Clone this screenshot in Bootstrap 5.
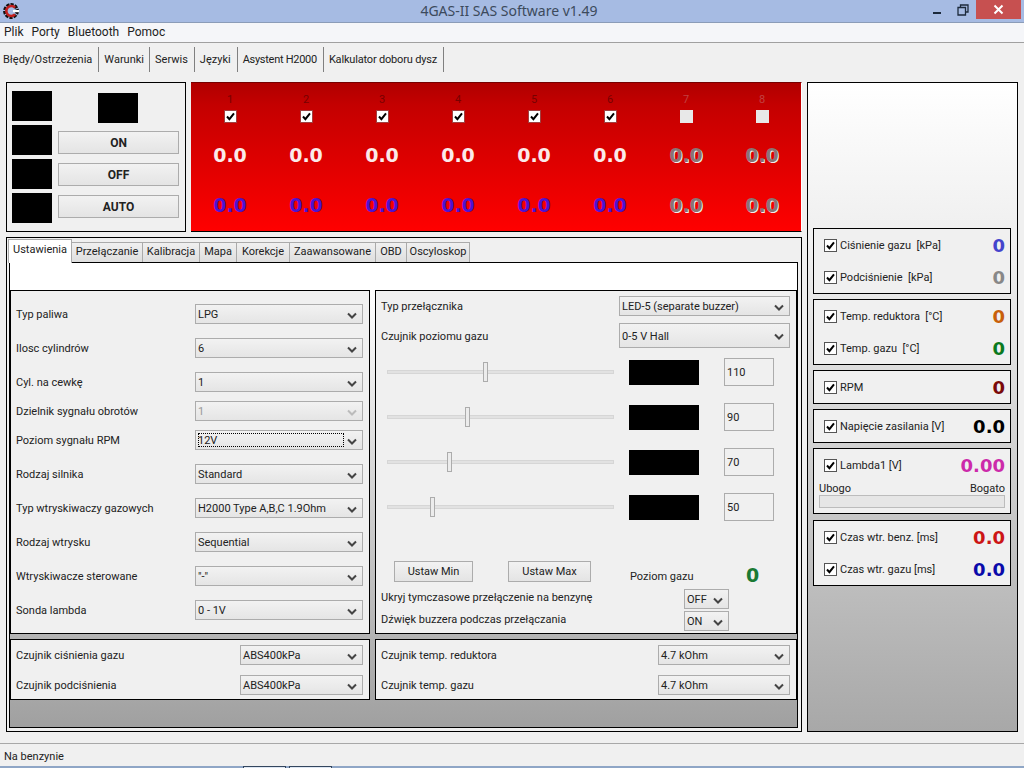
<!DOCTYPE html>
<html lang="pl">
<head>
<meta charset="utf-8">
<title>4GAS-II SAS Software v1.49</title>
<link rel="stylesheet" href="https://cdn.jsdelivr.net/npm/bootstrap@5.3.0/dist/css/bootstrap.min.css">
<style>
html,body{height:768px;overflow:hidden;margin:0}
body{background:#f0f0f0;font-family:Roboto,"Noto Sans",sans-serif;font-size:11px;color:#222;line-height:1.2}
.win-title{height:23px;background:#a6bbe3;border-bottom:1px solid #8b9cb8;position:relative}
.win-name{font-size:14px;font-family:"Noto Sans",sans-serif;color:#3c4a5c;width:100%;text-align:center;padding-right:6px}
.win-logo{position:absolute;left:2px;top:2px}
.win-btns{position:absolute;right:3px;top:0;height:19px}
.win-close{width:45px;height:19px;background:#c75050}
.win-ctl{width:26px;height:19px}
.menu-strip{height:20px;background:#f5f6f9;border-bottom:1px solid #a0a0a0;padding-left:4px;font-size:12px;gap:8px}
.tool-strip{height:39px;padding-top:4px;padding-left:3px}
.tool-item{height:25px;border-right:1px solid #808080;padding-right:6px;margin-right:5px}
.tool-item.tool-w{padding-right:5px}
.tool-item.tool-a{letter-spacing:-.28px}
.tool-item.tool-k{letter-spacing:-.18px}
.main-area{height:651px;padding-left:6px;gap:5px}
.left-col{width:796px}
.top-row{height:150px;gap:5px}
.inj-ctl{width:180px;border:1px solid #000;background:#f0f0f0;padding:8px 6px 8px 5px;gap:6px}
.blk{background:#000}
.sq{width:40px;height:30px}
.sq-stack{gap:4px}
.ctl-btn{width:121px;height:23px;margin-left:0;background:linear-gradient(#f2f2f2,#e4e4e4);border:1px solid #acacac;border-radius:0;font-weight:700;font-size:12px;padding:0;color:#222;line-height:1}
.ctl-col{gap:9px}
.big-sq{margin:2px 0 8px 40px}
.red-panel{width:611px;background:linear-gradient(#b00000,#c40000 15%,#ff0000);border-bottom:1px solid #000;border-right:1px solid #fff;border-top:1px solid #700;padding-left:1px}
.red-col{width:76px;text-align:center;padding-top:11px}
.red-num{height:12px;font-size:11px;color:#700;line-height:12px}
.red-num.off{color:#c24040}
.cyl-check{margin:4px auto 0;height:16px}
.val-r{font-family:"DejaVu Sans",sans-serif;font-weight:700;font-size:19px;line-height:24px;letter-spacing:0}
.val-w{color:#fbeaea;margin-top:17px}
.val-b{color:#4f12cf;margin-top:26px}
.val-g{color:#8a7474;text-shadow:1px 1px 0 #f2eeee}
.tabs-box{height:495px;margin-top:5px;border:1px solid #000;padding:2px 3px 4px 2px;background:#f0f0f0;position:relative}
.tab-head{height:22px;margin-left:-1px;align-items:flex-end}
.tab-a{height:24px;width:64px;background:#fff;border:1px solid #aaa;border-bottom:0;text-align:center;padding-top:3px;margin-bottom:-1px;z-index:2;position:relative}
.tab-i{height:20px;background:linear-gradient(#f0f0f0,#dedede);border:1px solid #aaa;border-left:0;border-bottom:0;text-align:center;padding-top:2px}
.tab-page{height:466px;border:1px solid #000;background:linear-gradient(#fff,#fff 26px,#a0a0a0);padding-top:27px}
.grp{border:1px solid #000;background:#f0f0f0}
.grp-l{width:360px}
.grp-r{width:422px;margin-left:5px}
.grp-tall{height:344px}
.grp-low{height:61px;margin-top:5px}
.set-row{height:20px;padding-left:5px;padding-right:6px}
.set-row .lbl{width:179px;padding-top:2px}
.set-row .lbl-low{width:224px;padding-top:2px}
.gap-first{margin-top:13px}
.gap-big{margin-top:14px}
.gap-small{margin-top:9px}
.win-select{height:20px;border:1px solid #acacac;border-radius:0;padding:2px 18px 0 2px;font-family:inherit;font-size:11px;color:#222;line-height:1.2;background-color:#ebebeb;background-image:linear-gradient(#f2f2f2,#e5e5e5);position:relative;display:flex;align-items:center}
.win-select svg{position:absolute;right:5px;top:7px}
.sel-w{width:168px}
.sel-low{width:123px}
.sel-r{width:171px}
.sel-rl{width:132px}
.sel-dis{color:#999}
.sel-tall{height:25px}
.sel-tall svg{top:9px}
.focus-box{position:absolute;left:2px;top:2px;bottom:2px;right:18px;border:1px dotted #000}
.rgrp-pad{padding:5px 6px 0 5px}
.rlbl{width:238px;padding-top:2px}
.rlbl-low{width:277px;padding-top:2px}
.row-7{margin-top:7px}
.row-2{margin-top:2px}
.row-10{margin-top:10px}
.row-5{margin-top:5px}
.slide-first{margin-top:2px}
.slide-row{height:45px;display:flex;align-items:center}
.slide-track{width:227px;height:4px;background:#e2e2e2;border:1px solid #d6d6d6;margin:-2px 0 0 6px;position:relative}
.slide-knob{position:absolute;top:-9px;width:5px;height:20px;background:#ececec;border:1px solid #acacac}
.lvl{width:70px;height:25px;margin-left:15px}
.num-box{width:50px;height:28px;margin:-1px 0 0 25px;border:1px solid #acacac;background:#f0f0f0;padding:2px 0 0 2px;display:flex;align-items:center}
.std-btn{height:21px;background:linear-gradient(#f2f2f2,#e4e4e4);border:1px solid #acacac;border-radius:0;padding:0;font-size:11px;color:#222;line-height:1}
.btn-row{margin-top:31px;height:21px}
.btn-mn{width:79px;margin-left:13px}
.btn-mx{width:83px;margin-left:35px}
.lvl-lbl{margin-left:39px;padding-top:9px;width:116px}
.lvl-val{font-family:"DejaVu Sans",sans-serif;font-weight:700;font-size:19px;color:#1a7a34;line-height:19px;margin-top:5px}
.sel-s{width:45px}
.hide-lbl{width:303px}
.hide-up{padding-bottom:2px}
.side-panel{width:211px;height:650px;border:1px solid #000;background:linear-gradient(#fff,#f0f0f0 22%,#f0f0f0 24%,#a8a8a8);padding:145px 6px 0 5px}
.side-grp{border:1px solid #000;background:#f0f0f0;margin-bottom:5px;padding:0 5px 0 10px}
.side-grp.mb-six{margin-bottom:6px}
.h65{height:66px}
.h34{height:34px}
.side-row{height:32px}
.side-row .lbl2{flex:1 1 auto;padding:2px 0 0 3px}
.side-val{font-family:"DejaVu Sans",sans-serif;font-weight:700;line-height:20px;font-size:18px;padding-top:2px}
.side-bar{height:13px;background:#e6e6e6;border:1px solid #bcbcbc;margin:0 0 0 -5px}
.lam-txt{margin:1px 0 0 -5px;justify-content:space-between}
.win-check.form-check-input[type=checkbox]{width:13px;height:13px;margin:0;border:1px solid #555;border-radius:0;background-color:#fff;flex:none}
.win-check.form-check-input[type=checkbox]:checked{background-color:#fff;border-color:#555;background-size:11px 11px;background-image:url("data:image/svg+xml,%3csvg xmlns='http://www.w3.org/2000/svg' viewBox='0 0 11 11'%3e%3cpath fill='none' stroke='%23000' stroke-width='2' d='M2 5.5l2.4 2.6L9 2.4'/%3e%3c/svg%3e")}
.win-check:focus{box-shadow:none}
.win-check.form-check-input[type=checkbox]:disabled{opacity:1;background-color:#e8e8e8;border-color:#e8e8e8}
.win-check.red-check.form-check-input[type=checkbox]{border-color:#a04040}
.status-strip{height:23px;border-top:1px solid #a8a8a8;padding:6px 0 0 4px;margin-top:10px}
.task-strip{height:3px;background:#8fa6c6;padding-left:243px;gap:3px}
.task-btn{width:43px;height:3px;border:1px solid #33465e;border-bottom:0;background:#dde6f2}
</style>
</head>
<body>
<div class="win-title d-flex align-items-center">
  <svg class="win-logo" width="18" height="18" viewBox="0 0 18 18"><circle cx="9" cy="9" r="6.2" fill="none" stroke="#111" stroke-width="3.4" stroke-dasharray="3 1"/><path d="M13 5.6A5 5 0 1 0 13 12.4" fill="none" stroke="#c3201f" stroke-width="2.6"/><rect x="11" y="8" width="6" height="2.2" fill="#fff"/></svg>
  <div class="win-name">4GAS-II SAS Software v1.49</div>
  <div class="win-btns d-flex">
    <div class="win-ctl d-flex align-items-center justify-content-center"><svg width="10" height="10" viewBox="0 0 10 10"><rect x="1" y="7" width="8" height="2" fill="#1c2a3c"/></svg></div>
    <div class="win-ctl d-flex align-items-center justify-content-center"><svg width="12" height="12" viewBox="0 0 12 12"><path d="M3.5 3V1H11V8H8.5M1 3.5H8.5V11H1Z" fill="none" stroke="#1c2a3c" stroke-width="1.3"/></svg></div>
    <div class="win-close d-flex align-items-center justify-content-center"><svg width="11" height="11" viewBox="0 0 11 11"><path d="M1.5 1.5L9.5 9.5M9.5 1.5L1.5 9.5" stroke="#fff" stroke-width="2"/></svg></div>
  </div>
</div>
<div class="menu-strip d-flex align-items-center"><span>Plik</span><span>Porty</span><span>Bluetooth</span><span>Pomoc</span></div>
<div class="tool-strip d-flex">
  <div class="tool-item d-flex align-items-center">Błędy/Ostrzeżenia</div>
  <div class="tool-item tool-w d-flex align-items-center">Warunki</div>
  <div class="tool-item d-flex align-items-center">Serwis</div>
  <div class="tool-item d-flex align-items-center">Języki</div>
  <div class="tool-item tool-a d-flex align-items-center">Asystent H2000</div>
  <div class="tool-item tool-k d-flex align-items-center">Kalkulator doboru dysz</div>
</div>
<div class="main-area d-flex">
  <div class="left-col">
    <div class="top-row d-flex">
      <div class="inj-ctl d-flex">
        <div class="sq-stack d-flex flex-column"><div class="blk sq"></div><div class="blk sq"></div><div class="blk sq"></div><div class="blk sq"></div></div>
        <div class="flex-grow-1">
          <div class="blk sq big-sq"></div>
          <div class="ctl-col d-flex flex-column">
            <button class="btn ctl-btn">ON</button><button class="btn ctl-btn">OFF</button><button class="btn ctl-btn">AUTO</button>
          </div>
        </div>
      </div>
      <div class="red-panel d-flex">
        <div class="red-col"><div class="red-num">1</div><div class="cyl-check"><input class="form-check-input win-check red-check" type="checkbox" checked></div><div class="val-r val-w">0.0</div><div class="val-r val-b">0.0</div></div>
        <div class="red-col"><div class="red-num">2</div><div class="cyl-check"><input class="form-check-input win-check red-check" type="checkbox" checked></div><div class="val-r val-w">0.0</div><div class="val-r val-b">0.0</div></div>
        <div class="red-col"><div class="red-num">3</div><div class="cyl-check"><input class="form-check-input win-check red-check" type="checkbox" checked></div><div class="val-r val-w">0.0</div><div class="val-r val-b">0.0</div></div>
        <div class="red-col"><div class="red-num">4</div><div class="cyl-check"><input class="form-check-input win-check red-check" type="checkbox" checked></div><div class="val-r val-w">0.0</div><div class="val-r val-b">0.0</div></div>
        <div class="red-col"><div class="red-num">5</div><div class="cyl-check"><input class="form-check-input win-check red-check" type="checkbox" checked></div><div class="val-r val-w">0.0</div><div class="val-r val-b">0.0</div></div>
        <div class="red-col"><div class="red-num">6</div><div class="cyl-check"><input class="form-check-input win-check red-check" type="checkbox" checked></div><div class="val-r val-w">0.0</div><div class="val-r val-b">0.0</div></div>
        <div class="red-col"><div class="red-num off">7</div><div class="cyl-check"><input class="form-check-input win-check" type="checkbox" disabled></div><div class="val-r val-w val-g">0.0</div><div class="val-r val-b val-g">0.0</div></div>
        <div class="red-col"><div class="red-num off">8</div><div class="cyl-check"><input class="form-check-input win-check" type="checkbox" disabled></div><div class="val-r val-w val-g">0.0</div><div class="val-r val-b val-g">0.0</div></div>
      </div>
    </div>
    <div class="tabs-box">
      <div class="tab-head d-flex">
        <div class="tab-a">Ustawienia</div>
        <div class="tab-i" style="width:71px">Przełączanie</div>
        <div class="tab-i" style="width:57px">Kalibracja</div>
        <div class="tab-i" style="width:37px">Mapa</div>
        <div class="tab-i" style="width:53px">Korekcje</div>
        <div class="tab-i" style="width:86px">Zaawansowane</div>
        <div class="tab-i" style="width:31px">OBD</div>
        <div class="tab-i" style="width:63px">Oscyloskop</div>
      </div>
      <div class="tab-page">
        <div class="d-flex">
          <div class="grp grp-l grp-tall">
            <div class="set-row d-flex align-items-center gap-first"><div class="lbl">Typ paliwa</div><div class="win-select sel-w">LPG<svg width="10" height="7" viewBox="0 0 10 7"><path d="M1 1.5L5 5.5L9 1.5" fill="none" stroke="#444" stroke-width="2"/></svg></div></div>
            <div class="set-row d-flex align-items-center gap-big"><div class="lbl">Ilosc cylindrów</div><div class="win-select sel-w">6<svg width="10" height="7" viewBox="0 0 10 7"><path d="M1 1.5L5 5.5L9 1.5" fill="none" stroke="#444" stroke-width="2"/></svg></div></div>
            <div class="set-row d-flex align-items-center gap-big"><div class="lbl">Cyl. na cewkę</div><div class="win-select sel-w">1<svg width="10" height="7" viewBox="0 0 10 7"><path d="M1 1.5L5 5.5L9 1.5" fill="none" stroke="#444" stroke-width="2"/></svg></div></div>
            <div class="set-row d-flex align-items-center gap-small"><div class="lbl">Dzielnik sygnału obrotów</div><div class="win-select sel-w sel-dis">1<svg width="10" height="7" viewBox="0 0 10 7"><path d="M1 1.5L5 5.5L9 1.5" fill="none" stroke="#bbb" stroke-width="2"/></svg></div></div>
            <div class="set-row d-flex align-items-center gap-small"><div class="lbl">Poziom sygnału RPM</div><div class="win-select sel-w">12V<span class="focus-box"></span><svg width="10" height="7" viewBox="0 0 10 7"><path d="M1 1.5L5 5.5L9 1.5" fill="none" stroke="#444" stroke-width="2"/></svg></div></div>
            <div class="set-row d-flex align-items-center gap-big"><div class="lbl">Rodzaj silnika</div><div class="win-select sel-w">Standard<svg width="10" height="7" viewBox="0 0 10 7"><path d="M1 1.5L5 5.5L9 1.5" fill="none" stroke="#444" stroke-width="2"/></svg></div></div>
            <div class="set-row d-flex align-items-center gap-big"><div class="lbl">Typ wtryskiwaczy gazowych</div><div class="win-select sel-w">H2000 Type A,B,C 1.9Ohm<svg width="10" height="7" viewBox="0 0 10 7"><path d="M1 1.5L5 5.5L9 1.5" fill="none" stroke="#444" stroke-width="2"/></svg></div></div>
            <div class="set-row d-flex align-items-center gap-big"><div class="lbl">Rodzaj wtrysku</div><div class="win-select sel-w">Sequential<svg width="10" height="7" viewBox="0 0 10 7"><path d="M1 1.5L5 5.5L9 1.5" fill="none" stroke="#444" stroke-width="2"/></svg></div></div>
            <div class="set-row d-flex align-items-center gap-big"><div class="lbl">Wtryskiwacze sterowane</div><div class="win-select sel-w">"-"<svg width="10" height="7" viewBox="0 0 10 7"><path d="M1 1.5L5 5.5L9 1.5" fill="none" stroke="#444" stroke-width="2"/></svg></div></div>
            <div class="set-row d-flex align-items-center gap-big"><div class="lbl">Sonda lambda</div><div class="win-select sel-w">0 - 1V<svg width="10" height="7" viewBox="0 0 10 7"><path d="M1 1.5L5 5.5L9 1.5" fill="none" stroke="#444" stroke-width="2"/></svg></div></div>
          </div>
          <div class="grp grp-r grp-tall rgrp-pad">
            <div class="d-flex align-items-center"><div class="rlbl">Typ przełącznika</div><div class="win-select sel-r">LED-5 (separate buzzer)<svg width="10" height="7" viewBox="0 0 10 7"><path d="M1 1.5L5 5.5L9 1.5" fill="none" stroke="#444" stroke-width="2"/></svg></div></div>
            <div class="d-flex align-items-center row-7"><div class="rlbl">Czujnik poziomu gazu</div><div class="win-select sel-r sel-tall">0-5 V Hall<svg width="10" height="7" viewBox="0 0 10 7"><path d="M1 1.5L5 5.5L9 1.5" fill="none" stroke="#444" stroke-width="2"/></svg></div></div>
            <div class="slide-row slide-first"><div class="slide-track"><div class="slide-knob" style="left:95px"></div></div><div class="blk lvl"></div><div class="num-box">110</div></div>
            <div class="slide-row"><div class="slide-track"><div class="slide-knob" style="left:77px"></div></div><div class="blk lvl"></div><div class="num-box">90</div></div>
            <div class="slide-row"><div class="slide-track"><div class="slide-knob" style="left:59px"></div></div><div class="blk lvl"></div><div class="num-box">70</div></div>
            <div class="slide-row"><div class="slide-track"><div class="slide-knob" style="left:42px"></div></div><div class="blk lvl"></div><div class="num-box">50</div></div>
            <div class="d-flex btn-row">
              <button class="btn std-btn btn-mn">Ustaw Min</button><button class="btn std-btn btn-mx">Ustaw Max</button>
              <div class="lvl-lbl">Poziom gazu</div><div class="lvl-val">0</div>
            </div>
            <div class="d-flex align-items-center row-7"><div class="hide-lbl hide-up">Ukryj tymczasowe przełączenie na benzynę</div><div class="win-select sel-s">OFF<svg width="10" height="7" viewBox="0 0 10 7"><path d="M1 1.5L5 5.5L9 1.5" fill="none" stroke="#444" stroke-width="2"/></svg></div></div>
            <div class="d-flex align-items-center row-2"><div class="hide-lbl hide-up">Dźwięk buzzera podczas przełączania</div><div class="win-select sel-s">ON<svg width="10" height="7" viewBox="0 0 10 7"><path d="M1 1.5L5 5.5L9 1.5" fill="none" stroke="#444" stroke-width="2"/></svg></div></div>
          </div>
        </div>
        <div class="d-flex">
          <div class="grp grp-l grp-low">
            <div class="set-row d-flex align-items-center row-5"><div class="lbl-low">Czujnik ciśnienia gazu</div><div class="win-select sel-low">ABS400kPa<svg width="10" height="7" viewBox="0 0 10 7"><path d="M1 1.5L5 5.5L9 1.5" fill="none" stroke="#444" stroke-width="2"/></svg></div></div>
            <div class="set-row d-flex align-items-center row-10"><div class="lbl-low">Czujnik podciśnienia</div><div class="win-select sel-low">ABS400kPa<svg width="10" height="7" viewBox="0 0 10 7"><path d="M1 1.5L5 5.5L9 1.5" fill="none" stroke="#444" stroke-width="2"/></svg></div></div>
          </div>
          <div class="grp grp-r grp-low rgrp-pad">
            <div class="d-flex align-items-center"><div class="rlbl-low">Czujnik temp. reduktora</div><div class="win-select sel-rl">4.7 kOhm<svg width="10" height="7" viewBox="0 0 10 7"><path d="M1 1.5L5 5.5L9 1.5" fill="none" stroke="#444" stroke-width="2"/></svg></div></div>
            <div class="d-flex align-items-center row-10"><div class="rlbl-low">Czujnik temp. gazu</div><div class="win-select sel-rl">4.7 kOhm<svg width="10" height="7" viewBox="0 0 10 7"><path d="M1 1.5L5 5.5L9 1.5" fill="none" stroke="#444" stroke-width="2"/></svg></div></div>
          </div>
        </div>
      </div>
    </div>
  </div>
  <div class="side-panel">
    <div class="side-grp h65"><div class="side-row d-flex align-items-center"><input class="form-check-input win-check" type="checkbox" checked><div class="lbl2">Ciśnienie gazu&nbsp; [kPa]</div><div class="side-val" style="color:#4444cc">0</div></div><div class="side-row d-flex align-items-center"><input class="form-check-input win-check" type="checkbox" checked><div class="lbl2">Podciśnienie&nbsp; [kPa]</div><div class="side-val" style="color:#888">0</div></div></div>
    <div class="side-grp h65"><div class="side-row d-flex align-items-center"><input class="form-check-input win-check" type="checkbox" checked><div class="lbl2">Temp. reduktora&nbsp; [°C]</div><div class="side-val" style="color:#c8600a">0</div></div><div class="side-row d-flex align-items-center"><input class="form-check-input win-check" type="checkbox" checked><div class="lbl2">Temp. gazu&nbsp; [°C]</div><div class="side-val" style="color:#0a7a1e">0</div></div></div>
    <div class="side-grp h34"><div class="side-row d-flex align-items-center"><input class="form-check-input win-check" type="checkbox" checked><div class="lbl2">RPM</div><div class="side-val" style="color:#7a0a0a">0</div></div></div>
    <div class="side-grp h34"><div class="side-row d-flex align-items-center"><input class="form-check-input win-check" type="checkbox" checked><div class="lbl2">Napięcie zasilania [V]</div><div class="side-val" style="color:#000">0.0</div></div></div>
    <div class="side-grp h65 mb-six"><div class="side-row d-flex align-items-center"><input class="form-check-input win-check" type="checkbox" checked><div class="lbl2">Lambda1 [V]</div><div class="side-val" style="color:#cc2aaa">0.00</div></div><div class="lam-txt d-flex"><span>Ubogo</span><span>Bogato</span></div><div class="side-bar"></div></div>
    <div class="side-grp h65"><div class="side-row d-flex align-items-center"><input class="form-check-input win-check" type="checkbox" checked><div class="lbl2">Czas wtr. benz. [ms]</div><div class="side-val" style="color:#cc1515">0.0</div></div><div class="side-row d-flex align-items-center"><input class="form-check-input win-check" type="checkbox" checked><div class="lbl2">Czas wtr. gazu [ms]</div><div class="side-val" style="color:#0a0aaa">0.0</div></div></div>
  </div>
</div>
<div class="status-strip">Na benzynie</div>
<div class="task-strip d-flex"><div class="task-btn"></div><div class="task-btn"></div></div>
<script src="https://cdn.jsdelivr.net/npm/bootstrap@5.3.0/dist/js/bootstrap.bundle.min.js"></script>
</body>
</html>
